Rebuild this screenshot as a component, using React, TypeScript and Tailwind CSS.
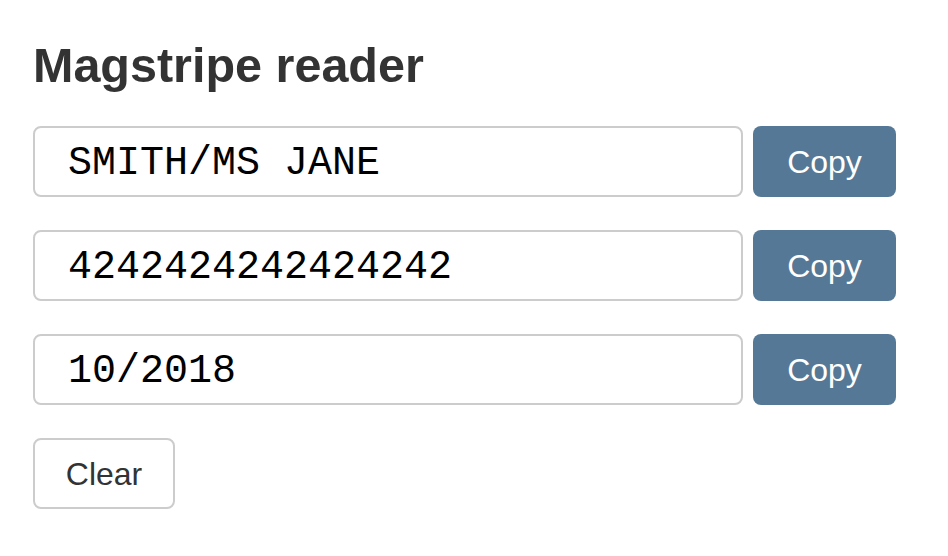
import React, { useState } from "react";

const fields = ["SMITH/MS JANE", "4242424242424242", "10/2018"];

const App = () => {
  const [values, setValues] = useState(fields);

  return (
    <div className="min-h-screen bg-white px-[33px] pt-[38px] font-['Liberation_Sans',Arial,sans-serif]">
      <h3 className="text-[48.5px] leading-[54px] font-bold text-[#333333]">Magstripe reader</h3>

      <div className="mt-[34px] flex w-[863px] flex-col gap-[33px]">
        {values.map((v, i) => (
          <div key={i} className="flex gap-[10px]">
            <input
              readOnly
              value={v}
              className="h-[71px] flex-1 rounded-[8px] border-2 border-[#cccccc] bg-white px-[33px] pt-[3px] font-['Liberation_Mono','Courier_New',monospace] text-[40px] text-black outline-none"
            />
            <button className="h-[71px] w-[143px] rounded-[8px] bg-[#557896] text-[32px] text-white">
              Copy
            </button>
          </div>
        ))}
      </div>

      <button
        onClick={() => setValues(["", "", ""])}
        className="mt-[33px] h-[71px] w-[142px] rounded-[8px] border-2 border-[#cccccc] bg-white text-[32px] text-[#333333]"
      >
        Clear
      </button>
    </div>
  );
};

export default App;
